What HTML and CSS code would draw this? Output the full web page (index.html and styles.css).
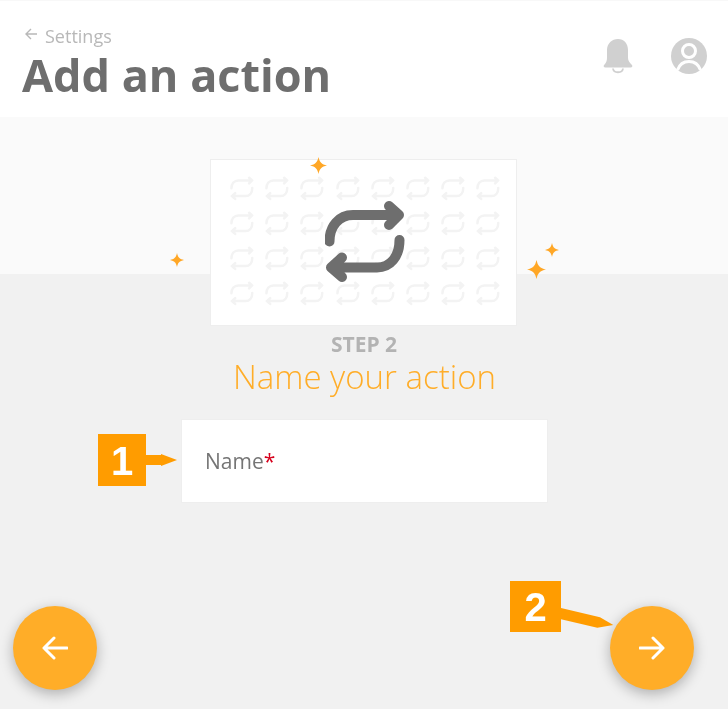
FILE: index.html
```html
<!DOCTYPE html>
<html>
<head>
  <title>Add an action</title>
  <link rel="stylesheet" href="styles.css">
</head>
<body>
  <svg class="defs" width="0" height="0" aria-hidden="true">
    <symbol id="repeat" viewBox="0 0 80 84">
      <path class="repeat-line" d="M4.500 41.500C4.500 26 14 15 28 15H74M64 6L74 15L64 25M74.500 40C74.500 57 65 67.500 52 67.500H6M17 57.500L6 67.500L17 77"/>
    </symbol>
    <symbol id="spark" viewBox="0 0 20 20">
      <path d="M10 0C11.500 6.500 13.500 8.500 20 10C13.500 11.500 11.500 13.500 10 20C8.500 13.500 6.500 11.500 0 10C6.500 8.500 8.500 6.500 10 0Z" fill="currentColor"/>
    </symbol>
  </svg>

  <div class="page">
    <header class="top">
      <div>
        <a class="back-link">
          <svg class="back-icon" viewBox="0 0 14 14"><path d="M13 7H2M7 2L2 7L7 12" fill="none" stroke="currentColor" stroke-width="1.400"/></svg>
          <span>Settings</span>
        </a>
        <h1>Add an action</h1>
      </div>
      <div class="top-icons">
        <svg class="bell" viewBox="0 0 30 36">
          <path d="M15 1C21 1 25 5.500 25 12V20C25 23 27 25 28.500 26.500C30 28 29.500 29.500 27.500 29.500H2.500C.5 29.500 0 28 1.500 26.500C3 25 4 23 4 20V12C4 5.500 9 1 15 1Z" fill="currentColor"/>
          <path d="M10 30.500C10.500 35.500 19.500 35.500 20 30.500" fill="none" stroke="currentColor" stroke-width="1.800"/>
        </svg>
        <svg class="avatar" viewBox="0 0 36 36">
          <circle cx="18" cy="18" r="18" fill="currentColor"/>
          <circle cx="18" cy="13" r="6.500" fill="none" stroke="#fff" stroke-width="3"/>
          <path d="M6.500 32C9 25 14 23.500 18 23.500C22 23.500 27 25 29.500 32" fill="none" stroke="#fff" stroke-width="3"/>
        </svg>
      </div>
    </header>

    <main class="content">
      <div class="hero">
        <div class="hero-grid">
          <svg><use href="#repeat"/></svg><svg><use href="#repeat"/></svg><svg><use href="#repeat"/></svg><svg><use href="#repeat"/></svg>
          <svg><use href="#repeat"/></svg><svg><use href="#repeat"/></svg><svg><use href="#repeat"/></svg><svg><use href="#repeat"/></svg>
          <svg><use href="#repeat"/></svg><svg><use href="#repeat"/></svg><svg><use href="#repeat"/></svg><svg><use href="#repeat"/></svg>
          <svg><use href="#repeat"/></svg><svg><use href="#repeat"/></svg><svg><use href="#repeat"/></svg><svg><use href="#repeat"/></svg>
          <svg><use href="#repeat"/></svg><svg><use href="#repeat"/></svg><svg><use href="#repeat"/></svg><svg><use href="#repeat"/></svg>
          <svg><use href="#repeat"/></svg><svg><use href="#repeat"/></svg><svg><use href="#repeat"/></svg><svg><use href="#repeat"/></svg>
          <svg><use href="#repeat"/></svg><svg><use href="#repeat"/></svg><svg><use href="#repeat"/></svg><svg><use href="#repeat"/></svg>
          <svg><use href="#repeat"/></svg><svg><use href="#repeat"/></svg><svg><use href="#repeat"/></svg><svg><use href="#repeat"/></svg>
        </div>
        <svg class="hero-icon"><use href="#repeat"/></svg>
        <svg class="spark spark-top"><use href="#spark"/></svg>
        <svg class="spark spark-left"><use href="#spark"/></svg>
        <svg class="spark spark-right"><use href="#spark"/></svg>
        <svg class="spark spark-big"><use href="#spark"/></svg>
      </div>

      <div class="step">STEP 2</div>
      <h2>Name your action</h2>

      <div class="field">Name<span class="req">*</span></div>

      <div class="actions">
        <button class="fab" aria-label="Back">
          <svg viewBox="0 0 26 24"><path d="M25 12H2M12 2L2 12L12 22" fill="none" stroke="currentColor" stroke-width="3" stroke-linecap="round" stroke-linejoin="round"/></svg>
        </button>
        <button class="fab" aria-label="Next">
          <svg viewBox="0 0 26 24"><path d="M1 12H24M14 2L24 12L14 22" fill="none" stroke="currentColor" stroke-width="3" stroke-linecap="round" stroke-linejoin="round"/></svg>
        </button>
      </div>
    </main>

    <div class="callout callout-one">1</div>
    <svg class="pointer pointer-one" viewBox="0 0 32 14"><path d="M0 2H15V1L31 7L15 13V12H0Z" fill="currentColor"/></svg>
    <div class="callout callout-two">2</div>
    <svg class="pointer pointer-two" viewBox="0 0 54 28"><path d="M0 0L39 9.300L52.300 17L36.300 19.700L0 11.300Z" fill="currentColor"/></svg>
  </div>
</body>
</html>
```

FILE: styles.css
```css
body {
  margin: 0;
  font-family: "Open Sans", sans-serif;
  background: #f1f1f1;
}
.defs {
  position: absolute;
}
.page {
  position: relative;
  display: flex;
  flex-direction: column;
  height: 709px;
  overflow: hidden;
  will-change: transform;
}
.top {
  display: flex;
  justify-content: space-between;
  height: 116px;
  padding: 0 21px 0 22px;
  background: white;
  border-top: 1px solid #f8f8f8;
}
.back-link {
  display: flex;
  align-items: center;
  gap: 7px;
  height: 24px;
  margin-top: 23px;
  padding-left: 2px;
  font-size: 18px;
  color: #b8b8b8;
}
.back-icon {
  width: 14px;
  height: 14px;
  margin-top: -4px;
}
h1 {
  margin: 0;
  font-size: 45px;
  line-height: 54px;
  font-weight: 700;
  color: #6e6e6e;
}
.top-icons {
  display: flex;
  align-items: flex-start;
  gap: 38px;
  padding-top: 37px;
  color: #d0d0d0;
}
.bell {
  width: 30px;
  height: 36px;
}
.avatar {
  width: 36px;
  height: 36px;
}
.content {
  flex: 1;
  display: flex;
  flex-direction: column;
  align-items: center;
  background: linear-gradient(#fafafa 157px, #f1f1f1 157px);
}
.hero {
  position: relative;
  box-sizing: border-box;
  width: 307px;
  height: 167px;
  margin-top: 42px;
  margin-right: 1px;
  padding: 16px 0 0 19px;
  background: white;
  border: 1px solid #eeeeee;
}
.repeat-line {
  fill: none;
  stroke: currentColor;
  stroke-width: var(--line, 10);
  stroke-linecap: round;
  stroke-linejoin: round;
}
.hero-grid {
  --line: 8.500;
  display: grid;
  grid-template-columns: repeat(8, 24px);
  grid-auto-rows: 25px;
  column-gap: 11.200px;
  row-gap: 10px;
  color: #f3f3f3;
}
.hero-grid svg {
  width: 24px;
  height: 25px;
}
.hero-icon {
  position: absolute;
  left: 114px;
  top: 40px;
  width: 80px;
  height: 84px;
  color: #6e6e6e;
}
.spark {
  position: absolute;
  color: #ffa726;
}
.spark-top {
  left: 99px;
  top: -3px;
  width: 17px;
  height: 17px;
}
.spark-left {
  left: -41px;
  top: 93px;
  width: 14px;
  height: 14px;
}
.spark-right {
  left: 334px;
  top: 83px;
  width: 14px;
  height: 14px;
}
.spark-big {
  left: 316px;
  top: 100px;
  width: 19px;
  height: 19px;
}
.step {
  margin-top: 5px;
  font-size: 21px;
  line-height: 27px;
  font-weight: 700;
  color: #b3b3b3;
}
h2 {
  margin: 0 0 0 1px;
  font-size: 33px;
  line-height: 37px;
  font-weight: 300;
  color: #ffad28;
}
.field {
  box-sizing: border-box;
  width: 367px;
  height: 84px;
  margin-top: 24px;
  margin-right: -1px;
  padding: 0 23px;
  font-size: 21px;
  line-height: 82px;
  color: #757575;
  background: white;
  border: 1px solid #eeeeee;
}
.req {
  color: #d6001c;
}
.actions {
  align-self: stretch;
  display: flex;
  justify-content: space-between;
  margin-top: auto;
  padding: 0 34px 19px 13px;
}
.fab {
  display: flex;
  align-items: center;
  justify-content: center;
  width: 84px;
  height: 84px;
  padding: 0;
  color: white;
  background: #ffad28;
  border: none;
  border-radius: 50%;
  box-shadow: 0 4px 14px rgba(0,0,0,0.28);
}
.fab svg {
  width: 26px;
  height: 24px;
}
.callout {
  position: absolute;
  font-family: "Liberation Sans", sans-serif;
  font-weight: 700;
  font-size: 40px;
  text-align: center;
  color: white;
  background: #ff9c00;
}
.callout-one {
  left: 98px;
  top: 434px;
  width: 48px;
  height: 52px;
  line-height: 54px;
}
.callout-two {
  left: 510px;
  top: 581px;
  width: 51px;
  height: 51px;
  line-height: 53px;
}
.pointer {
  position: absolute;
  color: #ff9c00;
}
.pointer-one {
  left: 146px;
  top: 453px;
  width: 32px;
  height: 14px;
}
.pointer-two {
  left: 561px;
  top: 608px;
  width: 54px;
  height: 28px;
}
```
